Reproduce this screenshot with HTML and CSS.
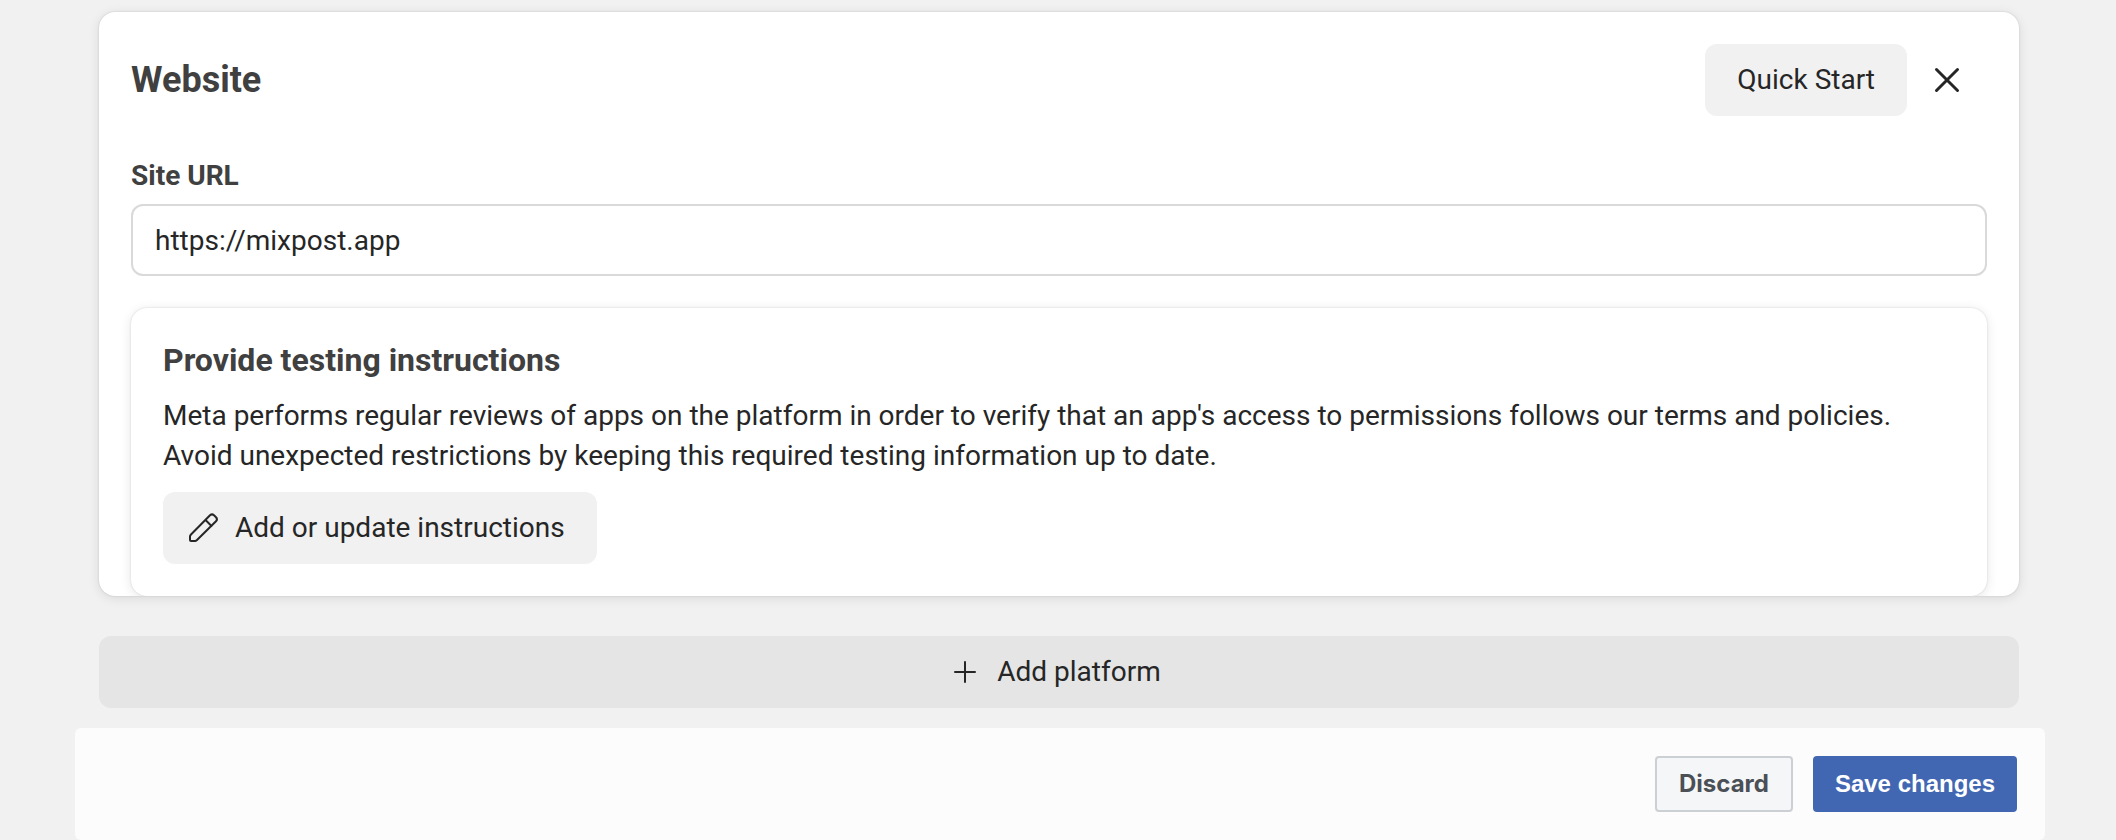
FILE: index.html
```html
<!DOCTYPE html>
<html lang="en">
<head>
  <meta charset="UTF-8" />
  <meta name="viewport" content="width=device-width, initial-scale=1.0"/>
  <title>App settings</title>
  <link rel="stylesheet" href="styles.css">
</head>
<body>

<main>
  <section class="card">
    <div class="card-header">
      <h2>Website</h2>
      <button type="button" class="btn">Quick Start</button>
      <button type="button" class="btn-close" aria-label="Remove platform">
        <svg class="icon" viewBox="0 0 32 32">
          <path d="M5.5 5.5L26.5 26.5M26.5 5.5L5.5 26.5" stroke-width="3"/>
        </svg>
      </button>
    </div>

    <label for="site-url">Site URL</label>
    <input type="text" id="site-url" value="https://mixpost.app">

    <div class="instructions">
      <h3>Provide testing instructions</h3>
      <p>Meta performs regular reviews of apps on the platform in order to verify that an app's access to permissions follows our terms and policies. Avoid unexpected restrictions by keeping this required testing information up to date.</p>
      <button type="button" class="btn btn-icon">
        <svg class="icon" viewBox="0 0 32 32">
          <path d="M4 29Q3 29 3 28V24.5Q3 23.5 4 22.5L23 3.2Q25 1.5 27 3.2L29 5.2Q31 7.2 29 9.2L10 28Q9 29 8 29Z M18.5 8L24.5 14" stroke-width="2"/>
        </svg>
        Add or update instructions
      </button>
    </div>
  </section>

  <button type="button" class="btn btn-icon btn-platform">
    <svg class="icon" viewBox="0 0 32 32">
      <path d="M16 6V26M6 16H26" stroke-width="2"/>
    </svg>
    Add platform
  </button>
</main>

<footer>
  <button type="button" class="btn-discard">Discard</button>
  <button type="button" class="btn-save">Save changes</button>
</footer>

</body>
</html>
```

FILE: styles.css
```css
* {
  box-sizing: border-box;
}
body {
  font-family: Roboto, sans-serif;
  font-size: 28px;
  line-height: 40px;
  background: #f1f1f1;
  color: #262626;
  margin: 0;
}
main {
  padding: 12px 97px 20px 99px;
}
h2, h3, p {
  margin: 0;
}
h2, h3, label {
  color: #404040;
  font-weight: bold;
}
h2 {
  flex: 1;
  font-size: 36px;
}
h3 {
  font-size: 32px;
}
.card {
  background: #fff;
  border-radius: 16px;
  padding: 32px 32px 0;
  margin-bottom: 40px;
  box-shadow: 0 0 2px rgba(0, 0, 0, 0.16), 0 2px 12px rgba(0, 0, 0, 0.1);
}
.card-header {
  display: flex;
  align-items: center;
  margin-bottom: 40px;
}
label {
  display: block;
  margin-bottom: 8px;
}
input {
  display: block;
  width: 100%;
  height: 72px;
  padding: 0 22px;
  border: 2px solid #d9d9d9;
  border-radius: 12px;
  background: #fff;
  color: inherit;
  font: inherit;
}
.instructions {
  margin-top: 32px;
  padding: 32px;
  border-radius: 16px;
  box-shadow: 0 0 2px rgba(0, 0, 0, 0.16), 0 2px 12px rgba(0, 0, 0, 0.1);
  clip-path: inset(-20px -20px 0);
}
.instructions p {
  margin: 16px 0;
}
button {
  border: none;
  font: inherit;
  color: inherit;
  cursor: pointer;
}
.btn {
  height: 72px;
  padding: 0 32px;
  border-radius: 12px;
  background: #f1f1f1;
}
.btn-icon {
  display: flex;
  align-items: center;
  justify-content: center;
  gap: 16px;
  padding-left: 24px;
}
.btn-platform {
  width: 100%;
  background: #e5e5e5;
}
.btn-close {
  display: flex;
  padding: 20px 24px;
  background: none;
}
.icon {
  width: 32px;
  height: 32px;
  fill: none;
  stroke: #262626;
  stroke-linecap: round;
  stroke-linejoin: round;
}
footer {
  display: flex;
  justify-content: flex-end;
  gap: 20px;
  margin: 0 71px 0 75px;
  padding: 28px;
  border-radius: 6px;
  background: #fcfcfc;
}
.btn-discard, .btn-save {
  height: 56px;
  padding: 0 22px;
  border-radius: 4px;
  font-size: 24px;
  font-weight: bold;
}
.btn-discard {
  border: 2px solid #ccd0d5;
  background: #f5f6f7;
  color: #4b4f56;
  font-family: Inter, sans-serif;
}
.btn-save {
  background: #4267b2;
  color: #fff;
  font-family: "Liberation Sans", Arial, sans-serif;
}
```
